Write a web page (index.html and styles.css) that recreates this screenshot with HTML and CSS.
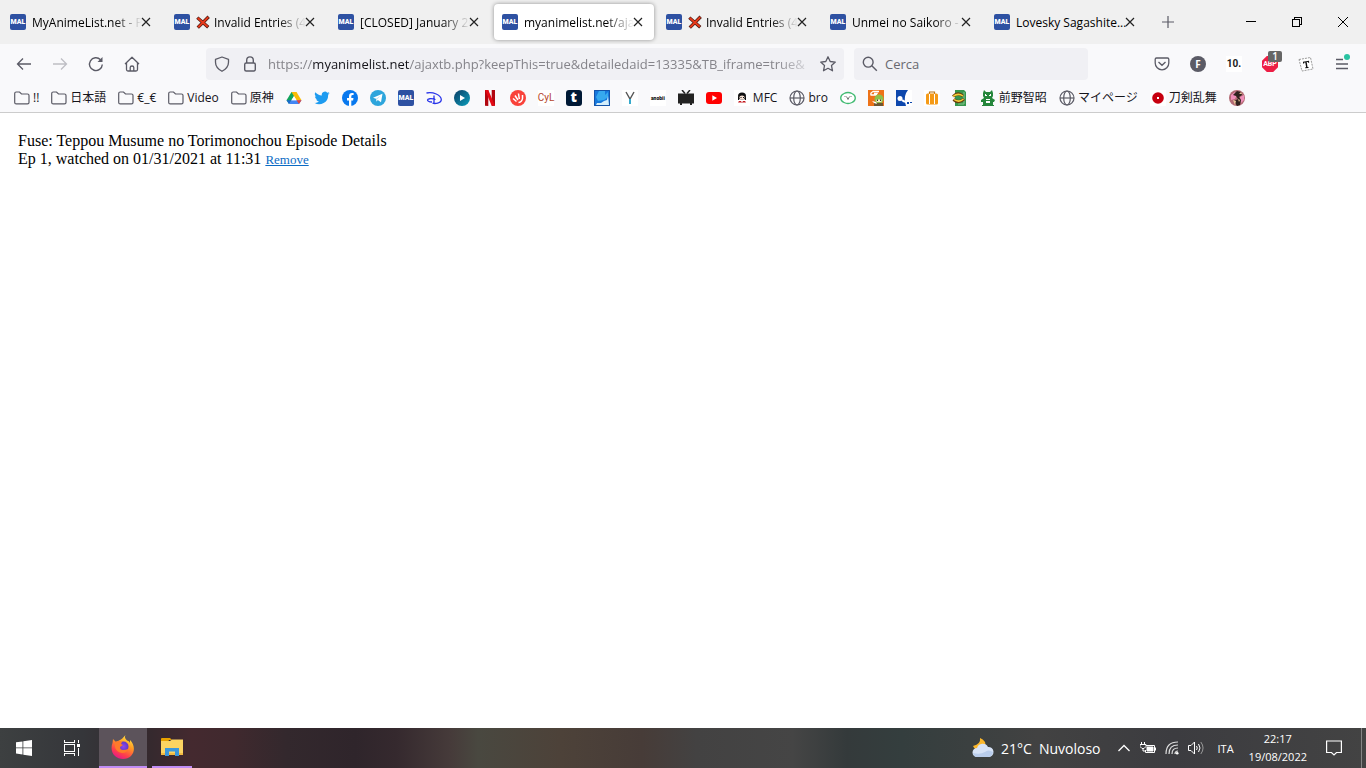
FILE: index.html
```html
<!DOCTYPE html>
<html lang="it">
<head>
    <meta charset="UTF-8">
    <meta name="viewport" content="width=device-width, initial-scale=1.0">
    <title>myanimelist.net/ajaxtb.php</title>
    <link rel="stylesheet" href="styles.css">
</head>
<body>
    <!-- shared icons -->
    <svg class="defs" width="0" height="0" aria-hidden="true">
        <symbol id="close" viewBox="0 0 16 16"><path d="M4 4l8 8M12 4l-8 8" stroke="#222" stroke-width="1.2" fill="none"/></symbol>
        <symbol id="cross" viewBox="0 0 16 16"><path d="M1.500 3L14 14M14.500 2L2 14.500" stroke="#4a1a12" stroke-width="3.800"/><path d="M2 3.500L13.500 13.500M14 2.500L2.500 14" stroke="#e8391a" stroke-width="2.200"/></symbol>
        <symbol id="folder" viewBox="0 0 16 16"><path d="M.7 3.500q0-1.500 1.500-1.500h3.300l2 2h6q1.500 0 1.500 1.500v7q0 1.300-1.500 1.300H2.200q-1.500 0-1.500-1.300z" fill="none" stroke="#5b5b66" stroke-width="1.200"/></symbol>
        <symbol id="globe" viewBox="0 0 16 16"><g fill="none" stroke="#5b5b66" stroke-width="1.200"><circle cx="8" cy="8" r="7"/><ellipse cx="8" cy="8" rx="3.300" ry="7"/><path d="M1 8h14"/></g></symbol>
    </svg>

    <header class="browser">
        <div class="tab-bar">
            <div class="tab"><span class="mal">MAL</span><span class="tab-title">MyAnimeList.net - P</span><button class="tab-close" aria-label="Chiudi scheda"><svg><use href="#close"/></svg></button></div>
            <div class="tab"><span class="mal">MAL</span><svg class="cross"><use href="#cross"/></svg><span class="tab-title">Invalid Entries (40</span><button class="tab-close" aria-label="Chiudi scheda"><svg><use href="#close"/></svg></button></div>
            <div class="tab"><span class="mal">MAL</span><span class="tab-title">[CLOSED] January 20</span><button class="tab-close" aria-label="Chiudi scheda"><svg><use href="#close"/></svg></button></div>
            <div class="tab active"><span class="mal">MAL</span><span class="tab-title">myanimelist.net/ajax</span><button class="tab-close" aria-label="Chiudi scheda"><svg><use href="#close"/></svg></button></div>
            <div class="tab"><span class="mal">MAL</span><svg class="cross"><use href="#cross"/></svg><span class="tab-title">Invalid Entries (40</span><button class="tab-close" aria-label="Chiudi scheda"><svg><use href="#close"/></svg></button></div>
            <div class="tab"><span class="mal">MAL</span><span class="tab-title">Unmei no Saikoro - M</span><button class="tab-close" aria-label="Chiudi scheda"><svg><use href="#close"/></svg></button></div>
            <div class="tab"><span class="mal">MAL</span><span class="tab-title whole">Lovesky Sagashite...</span><button class="tab-close" aria-label="Chiudi scheda"><svg><use href="#close"/></svg></button></div>
            <button class="new-tab" aria-label="Nuova scheda"><svg width="16" height="16"><path d="M8 2v12M2 8h12" stroke="#5b5b66" stroke-width="1.200"/></svg></button>
            <div class="window-buttons">
                <button aria-label="Riduci"><svg width="10" height="10" shape-rendering="crispEdges"><path d="M0 4.500h10" stroke="#000"/></svg></button>
                <button aria-label="Ripristina"><svg width="10" height="10" fill="none" stroke="#000" shape-rendering="crispEdges"><path d="M.5 2.500h7v7h-7zM2.500 2.500v-2h7v7h-2"/></svg></button>
                <button aria-label="Chiudi"><svg width="10" height="10"><path d="M0 0l10 10M10 0L0 10" stroke="#000"/></svg></button>
            </div>
        </div>

        <nav class="nav-bar">
            <button aria-label="Indietro"><svg width="16" height="16" fill="none" stroke="#5b5b66" stroke-width="1.300"><path d="M15 8H1.500M7 2.500L1.500 8 7 13.500"/></svg></button>
            <button aria-label="Avanti"><svg width="16" height="16" fill="none" stroke="#bebec4" stroke-width="1.300"><path d="M1 8h13.500M9 2.500L14.500 8 9 13.500"/></svg></button>
            <button aria-label="Ricarica"><svg width="16" height="16" fill="none" stroke="#5b5b66" stroke-width="1.400"><path d="M14.300 8.500A6.400 6.400 0 1 1 12.500 3.700"/><path d="M14.500 1v5H9.500z" fill="#5b5b66" stroke="none"/></svg></button>
            <button aria-label="Pagina iniziale"><svg width="16" height="16" fill="none" stroke="#5b5b66" stroke-width="1.300" stroke-linejoin="round"><path d="M1 8l7-6.800L15 8M2.500 7v6.500q0 1.500 1.500 1.500h8q1.500 0 1.500-1.500V7M6.200 15v-3.500q0-1.500 1.800-1.500t1.800 1.500V15"/></svg></button>
            <span class="spring"></span>
            <div class="url-bar">
                <svg width="16" height="16" fill="none" stroke="#5b5b66" stroke-width="1.300"><path d="M8 1l6.500 2.300v3q0 5.500-6.500 9-6.500-3.500-6.500-9v-3z" stroke-linejoin="round"/></svg>
                <svg width="16" height="16" fill="none" stroke="#5b5b66" stroke-width="1.400"><rect x="2.700" y="7" width="10.600" height="8" rx="1.500"/><path d="M4.700 7V4.200a3.300 3.300 0 0 1 6.600 0V7"/></svg>
                <div class="url">https://<b>myanimelist.net</b>/ajaxtb.php?keepThis=true&amp;detailedaid=13335&amp;TB_iframe=true&amp;</div>
                <button class="star" aria-label="Aggiungi ai segnalibri"><svg width="16" height="16" fill="none" stroke="#5b5b66" stroke-width="1.300" stroke-linejoin="round"><path d="M8 .8l2.200 4.700 5.100.6-3.800 3.500 1 5.200L8 12.300l-4.500 2.500 1-5.200L.7 6.100l5.100-.6z"/></svg></button>
            </div>
            <label class="search-bar">
                <svg width="16" height="16" fill="none" stroke="#5b5b66" stroke-width="1.400"><circle cx="6.200" cy="6.200" r="4.900"/><path d="M9.800 9.800l5 5"/></svg>
                <input type="text" placeholder="Cerca" aria-label="Cerca">
            </label>
            <span class="spring"></span>
            <button aria-label="Pocket"><svg width="16" height="16" fill="none" stroke="#5b5b66" stroke-width="1.300"><path d="M2.500 2h11q1.300 0 1.300 1.300V7a6.800 6.800 0 0 1-13.600 0V3.300Q1.200 2 2.500 2zM4.500 6L8 9.300 11.500 6"/></svg></button>
            <button aria-label="Estensione F"><span class="ext-f">F</span></button>
            <button aria-label="Estensione 10"><span class="ext-ten">10.</span></button>
            <button class="abp" aria-label="Adblock Plus"><span class="abp-icon">ABP</span><span class="abp-count">1</span></button>
            <button aria-label="Estensione T"><svg width="16" height="16"><path d="M1 3.500L12.500 1.500 15 13 4 15z" fill="#fff" stroke="#999" stroke-dasharray="2 1"/><path d="M5 5.800l6-1 .2 2h-1l-.5-.8-1 .1.800 4.800 1 .2v.8l-3.300.4v-.9l.9-.3-.8-4.700-1 .2-.2 1H5z" fill="#111"/></svg></button>
            <button class="menu" aria-label="Menu"><svg width="16" height="16" stroke="#5b5b66" stroke-width="1.300"><path d="M2 3.500h7M2 8h12M2 12.500h12"/></svg><span class="dot"></span></button>
        </nav>

        <nav class="bookmarks">
            <a href="#"><svg><use href="#folder"/></svg>!!</a>
            <a href="#"><svg><use href="#folder"/></svg>日本語</a>
            <a href="#"><svg><use href="#folder"/></svg>€_€</a>
            <a href="#"><svg><use href="#folder"/></svg>Video</a>
            <a href="#"><svg><use href="#folder"/></svg>原神</a>
            <a href="#" aria-label="Drive"><svg viewBox="0 0 16 16"><path d="M5.500 2h5L8 6 3 14 .5 10.300z" fill="#12a45c"/><path d="M5.500 2h5L15.500 10.300h-5z" fill="#fbbc05"/><path d="M5.400 10.300h10.100L13 14H3z" fill="#4285f4"/><path d="M10.500 10.300h5L13 14z" fill="#ea4335"/><path d="M.5 10.300h5L3 14z" fill="#1967d2"/><path d="M8 6.200l2.500 4.100h-5z" fill="#fff"/></svg></a>
            <a href="#" aria-label="Twitter"><svg viewBox="0 0 24 24"><path d="M23.500 4.900c-.8.400-1.700.6-2.600.7 1-.6 1.700-1.500 2-2.600-.9.500-1.900.9-3 1.100a4.700 4.700 0 0 0-8.100 4.300C7.900 8.200 4.400 6.400 2 3.500a4.700 4.700 0 0 0 1.500 6.300c-.8 0-1.500-.2-2.100-.6 0 2.300 1.600 4.300 3.800 4.700-.7.200-1.400.2-2.100.1.600 1.900 2.300 3.200 4.400 3.300A9.500 9.500 0 0 1 .5 19.300 13.500 13.500 0 0 0 21.200 7.300c.9-.7 1.700-1.500 2.300-2.400z" fill="#1d9bf0"/></svg></a>
            <a href="#" aria-label="Facebook"><svg viewBox="0 0 16 16"><circle cx="8" cy="8" r="8" fill="#0878ee"/><path d="M7 16v-5.500H5V8h2V6.300C7 4.100 8.200 3 10 3l1.600.1v2h-1Q9.300 5.100 9.300 6.400V8h2.200l-.4 2.500H9.300V16z" fill="#fff"/></svg></a>
            <a href="#" aria-label="Telegram"><svg viewBox="0 0 16 16"><circle cx="8" cy="8" r="8" fill="#2da5dc"/><path d="M3 7.800l9.500-4L11 12.300 7.800 10 6.500 11.500 6 8.800z" fill="#fff"/><path d="M6 8.800L10.500 5.800 7 9.500l-.5 2z" fill="#b9dff0"/></svg></a>
            <a href="#" aria-label="MyAnimeList"><span class="mal">MAL</span></a>
            <a href="#" aria-label="Disney"><svg viewBox="0 0 16 16" fill="none" stroke="#2834ea" stroke-width="1.300"><path d="M.5 3C7 1.500 15 5 15.300 9.500 15.300 13.500 8.500 14 6.500 13M8 5.500v7.500M9.500 9.500C5 8 1.500 8.800 1.500 10q0 1.800 4.500 2"/></svg></a>
            <a href="#" aria-label="Prime Video"><svg viewBox="0 0 16 16"><defs><linearGradient id="play" x2="1" y2="1"><stop stop-color="#0b3c64"/><stop offset="1" stop-color="#0ba0bd"/></linearGradient></defs><circle cx="8" cy="8" r="8" fill="url(#play)"/><path d="M6 5l5 3-5 3z" fill="#fff"/></svg></a>
            <a href="#" aria-label="Netflix"><svg viewBox="0 0 16 16"><path d="M3 0h3.300v16L3 15.700zM9.700 0H13v15.700l-3.300.3z" fill="#b1060f"/><path d="M3 0h3.300L13 15.800l-3.400-.3z" fill="#e50914"/></svg></a>
            <a href="#" aria-label="Guida"><svg viewBox="0 0 16 16"><circle cx="8" cy="8" r="8" fill="#f9423a"/><path d="M3 8.500l3.500 3M5 5.500l3 4.500M8.500 3.500l.8 5.500M12.500 5v3.500Q12 12 8.500 12.500" fill="none" stroke="#fff" stroke-width="1.500"/></svg></a>
            <a href="#" aria-label="CyL"><span class="cyl">CyL</span></a>
            <a href="#" aria-label="Tumblr"><span class="tumblr">t</span></a>
            <a href="#" aria-label="Sky"><svg viewBox="0 0 16 16"><path d="M0 0h16v16H0z" fill="#1678dc"/><path d="M5 1h6v4l3-3v5l-4 3-6 1-2-4z" fill="#36a9ee"/><path d="M2 15l1-2 4 0 3-2 3-1 1-4 1 9z" fill="#d4eefb"/><path d="M.5.5h15v15H.5z" fill="none" stroke="#1453a8"/></svg></a>
            <a href="#" aria-label="Y"><svg viewBox="0 0 16 16"><path d="M0 0h16v16H0z" fill="#fff"/><path d="M4 2l4 7 4-7" fill="none" stroke="#555" stroke-width="1.400"/><path d="M8 9v5" stroke="#36a9cc" stroke-width="2"/></svg></a>
            <a href="#" aria-label="anobii"><span class="anobii">anobii</span></a>
            <a href="#" aria-label="TV"><svg viewBox="0 0 16 16"><path d="M4 0l3 3.500M12 0L9 3.500" stroke="#222" stroke-width="1.500"/><path d="M0 3.500h16v10h-2V15h-2v-1.500H4V15H2v-1.500H0z" fill="#222"/></svg></a>
            <a href="#" aria-label="YouTube"><svg viewBox="0 0 16 16"><rect y="2" width="16" height="12" rx="3" fill="#f00"/><path d="M6.300 5.300L11 8l-4.700 2.700z" fill="#fff"/></svg></a>
            <a href="#"><svg viewBox="0 0 16 16"><path d="M0 0h16v16H0z" fill="#fff"/><ellipse cx="8" cy="6" rx="4" ry="3.500" fill="#111"/><ellipse cx="8" cy="7.500" rx="2.700" ry="2" fill="#fbe6d8"/><path d="M5 11h6l1 1.500H4z" fill="#c3161c"/><path d="M7.300 10h1.400v2H7.300z" fill="#fff"/><path d="M4 7h1.200v3H4zM10.800 7H12v3h-1.200zM6.500 7h1v1h-1zM9 7h1v1H9z" fill="#111"/></svg>MFC</a>
            <a href="#"><svg><use href="#globe"/></svg>bro</a>
            <a href="#" aria-label="V"><svg viewBox="0 0 16 16"><path d="M4 3.500Q8 1.500 12 3.500q3.300 1.500 3.300 4.500t-3.300 4.500q-4 2-8 0Q.7 11 .7 8T4 3.500z" fill="#fff" stroke="#40ba71" stroke-width="1.300"/><path d="M6.500 6.500L8 9.500l1.500-3M5 6v1M11 6v1" fill="none" stroke="#777"/></svg></a>
            <a href="#" aria-label="G"><svg viewBox="0 0 16 16"><path d="M0 0h16v16H0z" fill="#ed7218"/><path d="M11 1.500H5Q2 3 3 5h5l1-1.500H6" fill="none" stroke="#fff" stroke-width="1.300"/><circle cx="11" cy="9" r="4.500" fill="#8cc04b"/><path d="M8.500 9.500h5V12h-5z" fill="#fbe9c8"/><path d="M6 13h9v3H6z" fill="#6c5532"/><path d="M4 11l4 1 1 2-3-1z" fill="#fff"/><path d="M9 9.500h1v1.500H9zM12 9.500h1v1.500h-1z" fill="#333"/></svg></a>
            <a href="#" aria-label="Orbita"><svg viewBox="0 0 16 16"><path d="M0 0h16v16H0z" fill="#fff"/><path d="M0 0h12Q8 5 9 12l1 4H0z" fill="#0d47ad"/><circle cx="4" cy="8.500" r="2.500" fill="#fff"/><path d="M6 10q3 3 6 1" fill="none" stroke="#fff" stroke-width="2"/><path d="M11 12h2v2h-2zM14 12h2v1h-2z" fill="#0d47ad"/></svg></a>
            <a href="#" aria-label="Valigia"><svg viewBox="0 0 16 16"><path d="M0 0h16v16H0z" fill="#fff"/><path d="M5.500 4V2h5v2" fill="none" stroke="#b97514" stroke-width="1.200"/><rect x="2" y="3.500" width="12" height="11" rx="1.500" fill="#f59a16"/><path d="M5.500 4v10M10.500 4v10" stroke="#fff"/></svg></a>
            <a href="#" aria-label="Libro"><svg viewBox="0 0 16 16"><path d="M3 0h9l2 2v14H3z" fill="#35964d"/><path d="M12 2v12H6" fill="none" stroke="#86c28b"/><path d="M1 6.500Q6 1.500 11 6M12 9Q7 14 1.500 9.500" fill="none" stroke="#6b3c0c" stroke-width="3"/><path d="M1 6.500Q6 2.500 11 6M11.500 9Q7 13 2 9.500" fill="none" stroke="#f4cf39" stroke-width="1.500"/></svg></a>
            <a href="#"><svg viewBox="0 0 16 16"><path d="M4 0l2 2h4l2-2 1 3v3l-1 2 3 2-1 2h-1v3h1v1H2v-1h1v-3H1v-2l3-2-1-2V3z" fill="#25863b"/><path d="M5 4h2v2H5zM9 4h2v2H9zM6 9h4v4H6z" fill="#fff"/><path d="M6 4h1v1H6zM9 4h1v1H9zM6 10h4v1H6z" fill="#25863b"/></svg>前野智昭</a>
            <a href="#"><svg><use href="#globe"/></svg>マイページ</a>
            <a href="#"><svg viewBox="0 0 16 16"><path d="M0 0h16v16H0z" fill="#fff"/><circle cx="8" cy="8" r="5.800" fill="#c7000f"/><path d="M7 7h2v2H7z" fill="#fff"/></svg>刀剣乱舞</a>
            <a href="#" aria-label="Fiori"><svg viewBox="0 0 16 16"><circle cx="8" cy="8" r="8" fill="#b36b75"/><path d="M2 5l4-3 2 3-2 4-4 1zM11 7l4-2v5l-3 3z" fill="#f08fba"/><path d="M8 1l4 1 1 3-3 2 2 3-1 5-3 1-3-5 4-2-2-3-3-1z" fill="#30231f"/><path d="M4 10l3 1-1 4zM10 4l2-2 1 2zM9 9l2 1-1 2z" fill="#e8c49a"/></svg></a>
        </nav>
    </header>

    <main class="page">
        <div>Fuse: Teppou Musume no Torimonochou Episode Details</div>
        <div>Ep 1, watched on 01/31/2021 at 11:31 <a href="#">Remove</a></div>
    </main>

    <footer class="taskbar">
        <button class="task" aria-label="Start"><svg width="16" height="16" fill="#fff"><path d="M0 2.300L6.500 1.400V7.500H0zM7.300 1.300L16 0v7.500H7.300zM0 8.300h6.500v6.100L0 13.500zM7.300 8.300H16V16l-8.700-1.300z"/></svg></button>
        <button class="task" aria-label="Visualizzazione attività"><svg width="16" height="16" fill="none" stroke="#fff" shape-rendering="crispEdges"><path d="M.5 0v2.500h10V0M.5 4.500h10v7H.5zM.5 16v-2.500h10V16M14.500 0v3M14.500 8v8"/><path d="M13 4h3v3h-3z" fill="#fff" stroke="none"/></svg></button>
        <button class="task open current" aria-label="Firefox">
            <svg width="24" height="24" viewBox="0 0 24 24">
                <defs>
                    <linearGradient id="fox" x1=".8" y1="0" x2=".3" y2="1"><stop stop-color="#fff04a"/><stop offset=".4" stop-color="#ff9a22"/><stop offset=".75" stop-color="#ff3f4b"/><stop offset="1" stop-color="#e3178c"/></linearGradient>
                    <radialGradient id="orb"><stop stop-color="#8b49ef"/><stop offset="1" stop-color="#6037c6"/></radialGradient>
                </defs>
                <path d="M14.500 0C13 3 15 4 16 5.500 18 6 18.500 7 19 8V5c5 5 5 12 1 16-4 4-12 4-16 0C0 17 0 12 1.500 8L2 4l3 3 3-1.500C10 5 12 3 14.500 0z" fill="url(#fox)"/>
                <circle cx="12.500" cy="11.500" r="5" fill="url(#orb)"/>
                <path d="M4 7q4-2 7 0l-1 2 2 1-3 2q0 3 3 3 3 0 5-1-1 4-6 4-6-1-7-6z" fill="#ff7a2a"/>
            </svg>
        </button>
        <button class="task open" aria-label="Esplora file"><svg width="22" height="18" viewBox="0 0 22 18"><path d="M0 1q0-1 1-1h8l2 2h-3L7 4H0z" fill="#e8a200"/><path d="M0 3h9l2-1.500h11V17H0z" fill="#fcd462"/><path d="M0 15h22v2H0z" fill="#f2ba42"/><path d="M4 10h14v8h-4v-4.500H8V18H4z" fill="#3b97dc"/></svg></button>
        <div class="tray">
            <div class="weather">
                <svg width="22" height="20" viewBox="0 0 22 20"><path d="M8 0Q9 6 1 8q2 5 8 4 6-2 4-8-2-3-5-4z" fill="#fbb72c"/><path d="M5 19a4.500 4.500 0 0 1 0-9 6 6 0 0 1 11-1 5 5 0 0 1 1 10z" fill="#d7e3f7"/><path d="M1 15q7 2 12-1 3-3 8 0-1 5-5 5H5q-3 0-4-4z" fill="#b9cdec"/></svg>
                <span>21°C</span><span>Nuvoloso</span>
            </div>
            <button class="tray-icon" aria-label="Icone nascoste"><svg width="12" height="8" fill="none" stroke="#fff" stroke-width="1.300"><path d="M.5 7L6 1.500 11.500 7"/></svg></button>
            <button class="tray-icon" aria-label="Batteria"><svg width="16" height="12" fill="none" stroke="#fff"><path d="M6 3.500h8.500v7h-9V8M15.500 5.500v3M1.500 0v2M4.500 0v2M0 2.500h6v2L4 6.500H2l-2-2zM3 6.500V9h2"/><path d="M7 5h6v4H7z" fill="#fff"/></svg></button>
            <button class="tray-icon" aria-label="Rete"><svg width="14" height="14" fill="none" stroke="#ddd" stroke-width="1.200"><path d="M1 13Q1 1 13 1M4 13Q4 4 13 4M7 13Q7 7 13 7M10 13q0-3 3-3"/><circle cx="12.200" cy="12.200" r="1.300" fill="#fff" stroke="none"/></svg></button>
            <button class="tray-icon" aria-label="Volume"><svg width="16" height="14" fill="none" stroke="#fff"><path d="M.5 4.500h2.500l3.500-3.500v12L3 9.500H.5z"/><path d="M8.500 5q1.500 2 0 4M10.500 3q3 4 0 8"/><path d="M12.800 1q4.500 6 0 12" stroke="#999"/></svg></button>
            <span class="lang">ITA</span>
            <div class="clock"><span>22:17</span><span>19/08/2022</span></div>
            <button class="notify" aria-label="Notifiche"><svg width="16" height="16" fill="none" stroke="#fff" stroke-width="1.200"><path d="M.6 1h14.800v11.500H10.500L8 15l-2.500-2.500H.6z"/></svg></button>
            <span class="show-desktop"></span>
        </div>
    </footer>
</body>
</html>
```
FILE: styles.css
```css
* {
    box-sizing: border-box;
}
body {
    margin: 0;
    min-height: 100vh;
    display: flex;
    flex-direction: column;
    background-color: #fff;
    font-family: "Open Sans", "Noto Sans CJK JP", sans-serif;
    font-size: 12px;
    color: #15141a;
}
button {
    padding: 0;
    border: none;
    background: none;
    font-family: inherit;
    display: flex;
    align-items: center;
    justify-content: center;
    flex-shrink: 0;
}
svg {
    display: block;
    flex-shrink: 0;
}
.defs {
    position: absolute;
}

/* Tabs */
.tab-bar {
    display: flex;
    align-items: center;
    height: 44px;
    padding-left: 2px;
    gap: 4px;
    background-color: #f0f0f0;
}
.tab {
    display: flex;
    align-items: center;
    flex: 0 1 160px;
    min-width: 0;
    height: 36px;
    padding: 0 8px;
    border-radius: 4px;
    color: #000;
}
.tab.active {
    background-color: #fff;
    box-shadow: 0 0 4px rgba(0, 0, 0, 0.4);
}
.mal {
    width: 16px;
    height: 16px;
    flex-shrink: 0;
    border-radius: 2px;
    background-color: #2e51a2;
    color: #fff;
    font-family: Roboto, sans-serif;
    font-size: 7px;
    font-weight: 900;
    line-height: 16px;
    text-align: center;
}
.cross {
    width: 14px;
    height: 14px;
    margin-left: 6px;
    margin-right: -2px;
}
.tab-title {
    flex: 1;
    min-width: 0;
    margin-left: 6px;
    margin-right: -4px;
    overflow: hidden;
    white-space: nowrap;
    mask-image: linear-gradient(to left, transparent, #000 28px);
}
.tab-title.whole {
    mask-image: none;
}
.tab-close svg {
    width: 16px;
    height: 16px;
}
.new-tab {
    width: 36px;
    height: 36px;
}
.window-buttons {
    display: flex;
    margin-left: auto;
}
.window-buttons button {
    width: 46px;
    height: 44px;
}

/* Navigation */
.nav-bar {
    display: flex;
    align-items: center;
    height: 40px;
    padding: 0 6px;
    background-color: #f9f9fb;
}
.nav-bar > button {
    width: 36px;
    height: 36px;
}
.spring {
    flex: 0 1 56px;
}
.url-bar,
.search-bar {
    display: flex;
    align-items: center;
    height: 32px;
    padding: 0 8px;
    border-radius: 4px;
    background-color: #f0f0f4;
    font-size: 13px;
}
.url-bar {
    flex: 1;
    min-width: 0;
    gap: 12px;
}
.url {
    flex: 1;
    min-width: 0;
    overflow: hidden;
    white-space: nowrap;
    color: #85848a;
    margin-left: -2px;
    margin-right: -8px;
    mask-image: linear-gradient(to left, transparent, #000 40px);
}
.url b {
    font-weight: normal;
    color: #15141a;
}
.search-bar {
    flex: 0 1 234px;
    margin-left: 10px;
    gap: 7px;
}
.search-bar input {
    width: 100%;
    padding: 0;
    border: none;
    outline: none;
    background: none;
    font: inherit;
}
.search-bar input::placeholder {
    color: #69686f;
}
.ext-f {
    width: 16px;
    height: 16px;
    border-radius: 50%;
    background-color: #5b5b66;
    color: #fff;
    font-size: 10px;
    font-weight: bold;
    line-height: 16px;
}
.ext-ten {
    width: 16px;
    background-color: #fff;
    color: #222;
    font-family: Roboto, sans-serif;
    font-size: 10px;
    font-weight: bold;
    line-height: 16px;
}
.abp,
.menu {
    position: relative;
}
.abp-icon {
    width: 16px;
    height: 16px;
    background-color: #ed1e45;
    clip-path: polygon(30% 0, 70% 0, 100% 30%, 100% 70%, 70% 100%, 30% 100%, 0 70%, 0 30%);
    color: #fff;
    font-family: Roboto, sans-serif;
    font-size: 7px;
    font-weight: bold;
    line-height: 17px;
}
.abp-count {
    position: absolute;
    top: 5px;
    right: 6px;
    width: 14px;
    height: 11px;
    border-radius: 2px;
    background-color: #666;
    color: #fff;
    font-size: 10px;
    font-weight: 600;
    line-height: 11px;
}
.dot {
    position: absolute;
    top: 8px;
    right: 10px;
    width: 6px;
    height: 6px;
    border-radius: 50%;
    background-color: #2ac3a2;
}

/* Bookmarks */
.bookmarks {
    display: flex;
    align-items: center;
    height: 29px;
    padding-left: 8px;
    overflow: hidden;
    background-color: #f9f9fb;
    border-bottom: 1px solid #ccc;
}
.bookmarks a {
    display: flex;
    align-items: center;
    gap: 3px;
    padding: 0 6px;
    color: #15141a;
    line-height: 16px;
    white-space: nowrap;
    text-decoration: none;
}
.bookmarks svg {
    width: 16px;
    height: 16px;
}
.cyl {
    width: 16px;
    background-color: #fff;
    color: #b5452b;
    font-family: Roboto, sans-serif;
    font-size: 10px;
    text-align: center;
}
.tumblr {
    width: 16px;
    height: 16px;
    border-radius: 3px;
    background-color: #001935;
    color: #fff;
    font-size: 14px;
    font-weight: 800;
    line-height: 14px;
    text-align: center;
}
.anobii {
    width: 16px;
    background-color: #fff;
    color: #111;
    font-family: Roboto, sans-serif;
    font-size: 5px;
    font-weight: 900;
    text-align: center;
}

/* Page */
.page {
    flex: 1;
    padding: 19px 18px;
    font-family: "Liberation Serif", serif;
    font-size: 16px;
    line-height: 18px;
    color: #000;
}
.page a {
    color: #0b6bc4;
    font-size: 13px;
}

/* Taskbar */
.taskbar {
    display: flex;
    height: 40px;
    background: linear-gradient(to right, #3d4041 0, #35363a 6%, #35292e 11%, #44292f 14%, #40292e 17%, #33282d 21%, #2f252b 26%, #35292e 29%, #463b3a 33%, #494840 35%, #4d4239 41%, #473c38 47%, #434242 51%, #454545 58%, #343a3b 62%, #343e3e 66%, #424242 76%, #3c3c40 86%, #434343 100%);
    color: #fff;
}
.task {
    width: 48px;
    height: 40px;
}
.task:nth-child(2) {
    margin-right: 3px;
}
.task.open {
    border-bottom: 2px solid #c08cf5;
}
.task.current {
    background-color: #5c535b;
    margin-right: 5px;
}
.task.open:not(.current) {
    width: 40px;
}
.tray {
    display: flex;
    align-items: center;
    margin-left: auto;
    font-size: 11px;
}
.weather {
    display: flex;
    align-items: center;
    gap: 7px;
    margin-right: 11px;
    font-size: 14px;
}
.tray-icon {
    width: 24px;
    height: 40px;
}
.lang {
    margin: 0 15px 0 10px;
}
.clock {
    display: flex;
    flex-direction: column;
    align-items: center;
    line-height: 18px;
}
.notify {
    width: 54px;
    height: 40px;
}
.show-desktop {
    width: 5px;
    height: 40px;
    border-left: 1px solid #858585;
}
```
